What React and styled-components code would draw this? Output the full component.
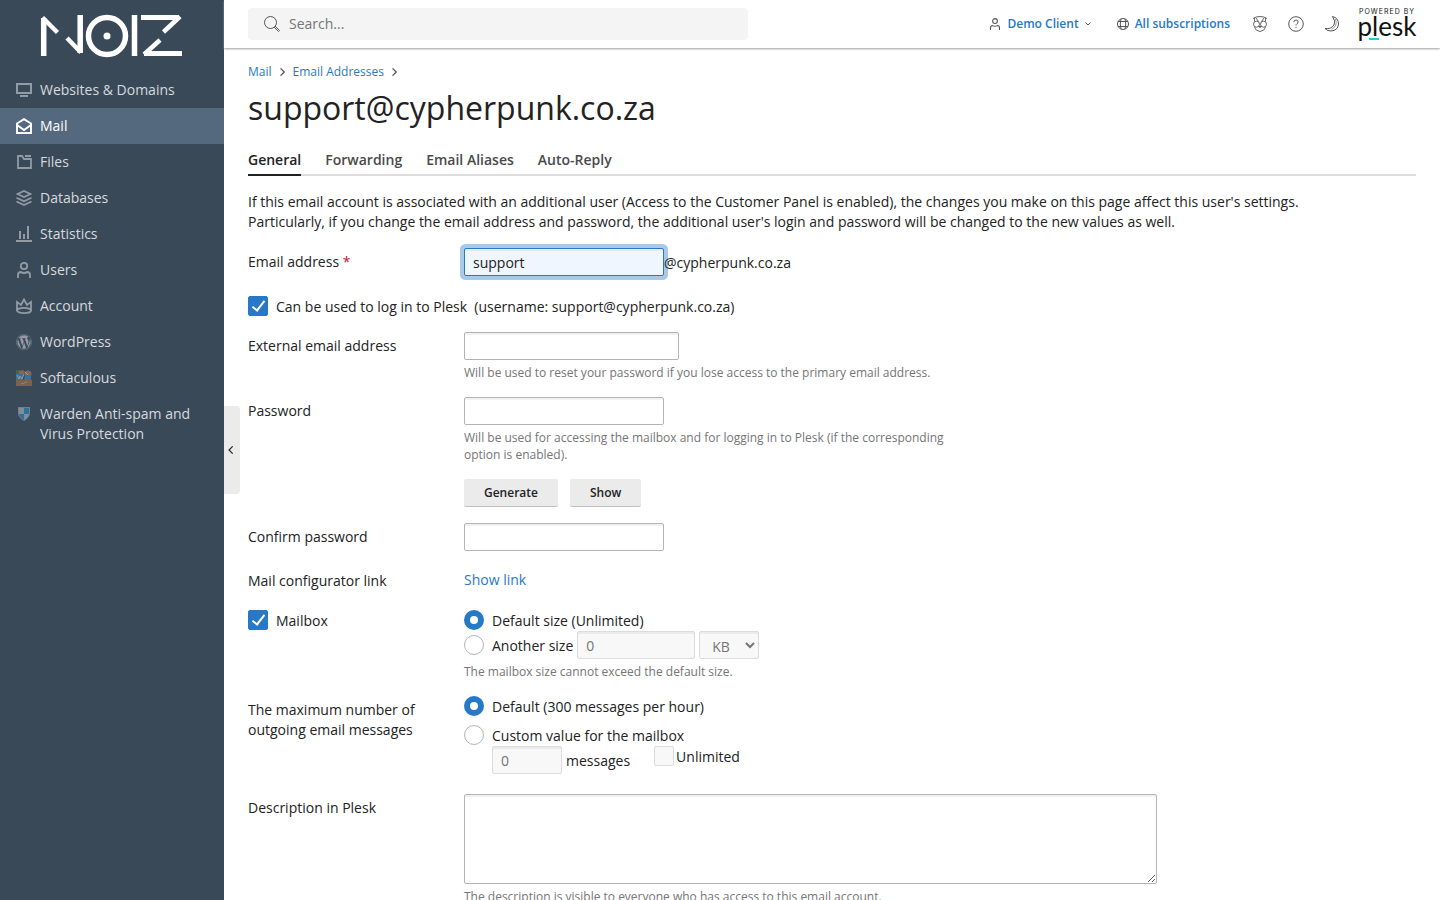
import React from 'react'
import styled, { createGlobalStyle, css } from 'styled-components'
import { FaWordpress } from 'react-icons/fa'

const GlobalStyle = createGlobalStyle`
    *, *::after {
        box-sizing: border-box;
    }
    body {
        margin: 0;
        background: #ffffff;
        color: #222222;
        font-family: "Open Sans", "Noto Sans", sans-serif;
        font-size: 14px;
        line-height: 20px;
    }
    input, select, textarea, button {
        font-family: inherit;
    }
    a {
        color: #2878c8;
        text-decoration: none;
    }
`

const Page = styled.div`
    display: flex;
    min-height: 100vh;
`

const Sidebar = styled.aside`
    flex: 0 0 224px;
    background: #3a4958;
`

const Brand = styled.a`
    display: flex;
    justify-content: center;
    height: 72px;
    padding-top: 12px;
`

const NavItem = styled.a`
    display: flex;
    gap: 8px;
    padding: 8px 16px;
    color: ${props => props.$active ? '#ffffff' : '#d6dade'};
    background: ${props => props.$active ? '#54697d' : 'transparent'};

    svg {
        flex: 0 0 16px;
        margin-top: 2px;
        color: ${props => props.$active ? '#ffffff' : '#929ba4'};
    }
`

const Content = styled.div`
    position: relative;
    flex: 1;
    min-width: 0;
`

const CollapseButton = styled.button`
    position: absolute;
    left: 0;
    top: 406px;
    width: 16px;
    height: 88px;
    padding: 0 2px 0 0;
    border: 0;
    border-radius: 0 4px 4px 0;
    background: #ebebeb;
    color: #222222;
    display: flex;
    align-items: center;
    justify-content: center;
`

const Header = styled.header`
    display: flex;
    align-items: center;
    justify-content: space-between;
    height: 48px;
    padding: 0 24px;
    box-shadow: 0 1px 2px #a0a0a0;
`

const SearchBox = styled.label`
    display: flex;
    align-items: center;
    gap: 9px;
    flex: 0 1 500px;
    height: 32px;
    padding: 0 16px;
    border-radius: 4px;
    background: #f4f4f4;
    color: #555555;

    input {
        flex: 1;
        height: 20px;
        margin-bottom: 2px;
        padding: 0;
        border: 0;
        outline: 0;
        background: transparent;
        font-size: 14px;
    }
    input::placeholder {
        color: #757575;
    }
`

const HeaderTools = styled.div`
    display: flex;
    align-items: center;
`

const HeaderLinks = styled.div`
    display: flex;
    gap: 26px;
    margin-right: 22px;
`

const HeaderLink = styled.a`
    display: flex;
    align-items: center;
    gap: 6px;
    font-size: 12px;
    font-weight: 600;

    svg {
        color: #555555;
    }
`

const HeaderIcons = styled.div`
    display: flex;
    gap: 20px;
    margin-right: 18px;
`

const IconButton = styled.button`
    display: flex;
    width: 16px;
    height: 16px;
    padding: 0;
    border: 0;
    background: transparent;
    color: #555555;
`

const PleskLogo = styled.a`
    display: flex;
    flex-direction: column;
    align-items: center;
    position: relative;
    width: 58px;
    height: 34px;
    color: #111111;
    font-family: Lato, sans-serif;

    small {
        font-family: Inter, sans-serif;
        font-size: 7px;
        line-height: 10px;
        letter-spacing: 1px;
        white-space: nowrap;
    }
    span {
        font-size: 26px;
        line-height: 18px;
    }
    &::after {
        content: '';
        position: absolute;
        left: 11px;
        bottom: 1px;
        width: 10px;
        height: 2px;
        background: #28c8e8;
    }
`

const Main = styled.main`
    padding: 14px 24px 0;
`

const Breadcrumbs = styled.nav`
    display: flex;
    align-items: center;
    gap: 7px;
    font-size: 12px;
    color: #555555;
`

const Title = styled.h1`
    margin: 6px 0 20px;
    font-size: 32px;
    line-height: 40px;
    font-weight: 400;
`

const Tabs = styled.nav`
    display: flex;
    gap: 24px;
    border-bottom: 2px solid #dcdcdc;
`

const Tab = styled.a`
    margin-bottom: -2px;
    padding: 2px 0 4px;
    border-bottom: 2px solid ${props => props.$active ? '#222222' : 'transparent'};
    color: ${props => props.$active ? '#222222' : '#4a4a4a'};
    font-weight: 600;
`

const Intro = styled.p`
    margin: 16px 0;
`

const FormRow = styled.div`
    display: grid;
    grid-template-columns: 184px minmax(0, 1fr);
    column-gap: 32px;
    margin-bottom: ${props => props.$gap || 16}px;
`

const FieldLabel = styled.label`
    padding-top: 4px;
`

const Required = styled.span`
    color: #c8102e;
`

const Suffix = styled.span`
    padding-top: 2px;
`

const field = css`
    border: 1px solid #b4b4b4;
    border-radius: 2px;
    background: #ffffff;
    box-shadow: inset 0 2px 0 #f0f0f0;
    color: #222222;
    font-size: 14px;

    &:disabled {
        border-color: #dcdcdc;
        background: #f8f8f8;
        box-shadow: inset 0 2px 0 #ebebeb;
        color: #757575;
    }
`

const TextInput = styled.input`
    ${field}
    display: block;
    width: ${props => props.$width}px;
    height: 28px;
    padding: 4px 8px;
    line-height: 18px;

    ${props => props.$focused && css`
        border-color: #2878c8;
        outline: 0;
        background: #eff6ff;
        box-shadow: 0 0 0 4px #a9c9e9, inset 0 2px 0 #e4ebf4;
    `}
`

const TextArea = styled.textarea`
    ${field}
    display: block;
    width: 100%;
    max-width: 693px;
    height: 90px;
    padding: 4px 8px;
`

const UnitSelect = styled.select`
    ${field}
    width: 60px;
    height: 28px;
    padding: 2px 0 0 8px;
    opacity: 1;
`

const Hint = styled.div`
    max-width: 500px;
    padding-top: 4px;
    color: #757575;
    font-size: 12px;
    line-height: 17px;
`

const Line = styled.div`
    display: flex;
    align-items: center;
    gap: ${props => props.$gap || 0}px;
    margin-top: ${props => props.$top || 0}px;
`

const Choice = styled.label`
    display: flex;
    align-items: flex-start;
    gap: ${props => props.$tight ? 2 : 8}px;
    white-space: pre-wrap;

    span {
        padding-top: 1px;
    }
`

const Checkbox = styled.input.attrs({ type: 'checkbox' })`
    appearance: none;
    flex: none;
    width: 20px;
    height: 20px;
    margin: 0;
    border: 1px solid #dcdcdc;
    border-radius: 2px;
    background: #f8f8f8;

    &:checked {
        display: flex;
        align-items: flex-start;
        justify-content: center;
        padding-top: 1px;
        border-color: #2878c8;
        background: #2878c8;
    }
    &:checked::after {
        content: '';
        width: 7px;
        height: 13px;
        border: solid #ffffff;
        border-width: 0 2px 2px 0;
        transform: rotate(38deg);
    }
`

const Radio = styled.input.attrs({ type: 'radio' })`
    appearance: none;
    flex: none;
    width: 20px;
    height: 20px;
    margin: 0;
    border: 1px solid #b4b4b4;
    border-radius: 50%;
    background: #ffffff;

    &:checked {
        border: 6px solid #2878c8;
    }
`

const CheckRow = styled.div`
    margin: 20px 0 15px;
`

const Indented = styled.div`
    display: flex;
    align-items: flex-start;
    gap: 24px;
    padding-left: 28px;
`

const ButtonBar = styled.div`
    display: flex;
    gap: 12px;
    margin-top: 16px;
`

const Button = styled.button`
    height: 28px;
    padding: 0 20px;
    border: 0;
    border-bottom: 1px solid #c0c0c0;
    border-radius: 2px;
    background: #ebebeb;
    color: #222222;
    font-size: 12px;
    font-weight: 600;
`

const Icon = ({ size = 16, width = 1, children }) => (
    <svg width={size} height={size} viewBox={`0 0 ${size} ${size}`} fill="none" stroke="currentColor" strokeWidth={width} aria-hidden="true">
        {children}
    </svg>
)

const Chevron = () => (
    <svg width="7" height="8" viewBox="0 0 7 8" fill="none" stroke="currentColor" strokeWidth="1.200" aria-hidden="true">
        <path d="M1.500 .3 5.200 4 1.500 7.700" />
    </svg>
)

const UserShape = () => (
    <>
        <circle cx="8" cy="4" r="3.2" />
        <path d="M2 16v-3q0-3 3-3 1 1 3 1t3-1q3 0 3 3v3" />
    </>
)

const NoizLogo = () => (
    <svg width="144" height="48" viewBox="0 0 144 48" fill="none" stroke="#ffffff" strokeWidth="5.500" role="img" aria-label="Noiz">
        <line x1="3.700" y1="6" x2="3.700" y2="44" />
        <line x1="2.500" y1="5.500" x2="17.500" y2="20.500" strokeWidth="4.500" />
        <line x1="27" y1="26" x2="41" y2="40.500" strokeWidth="4.500" />
        <line x1="40.200" y1="3" x2="40.200" y2="41" />
        <circle cx="67" cy="24" r="18.500" />
        <circle cx="67" cy="24" r="3.500" fill="#ffffff" stroke="none" />
        <line x1="94.500" y1="3" x2="94.500" y2="44" />
        <line x1="101" y1="5.500" x2="139" y2="5.500" strokeWidth="5" />
        <line x1="140" y1="4.500" x2="123.500" y2="20" strokeWidth="4.500" />
        <line x1="120" y1="28" x2="104" y2="42.500" strokeWidth="4.500" />
        <line x1="104" y1="41.500" x2="142" y2="41.500" strokeWidth="5" />
    </svg>
)

const navItems = [
    {
        label: 'Websites & Domains',
        icon: <Icon width={2}><path d="M1 2h14v9H1zM4 14h8" /></Icon>
    },
    {
        label: 'Mail',
        active: true,
        icon: <Icon width={2}><path d="M1 5.500 8 1.200l7 4.300V15H1zM1 7l7 5 7-5" /></Icon>
    },
    {
        label: 'Files',
        icon: <Icon width={1.8}><path d="M2 2h4l2 3h7v9H2zM9 2h6" /></Icon>
    },
    {
        label: 'Databases',
        icon: <Icon width={1.8}><path d="m1.500 4 6.500-3 6.500 3L8 7zM.5 7.700l7.500 3.600 7.500-3.600M.5 11.500 8 15l7.500-3.500" /></Icon>
    },
    {
        label: 'Statistics',
        icon: <Icon width={2}><path d="M0 15h16M4 5v8M8 8v5M12 0v13" /></Icon>
    },
    {
        label: 'Users',
        icon: <Icon width={1.8}><UserShape /></Icon>
    },
    {
        label: 'Account',
        icon: <Icon width={1.8}><path d="M1 13V4l4 3 3-5.500L11 7l4-3v9" /><ellipse cx="8" cy="12.500" rx="7" ry="2.600" /></Icon>
    },
    {
        label: 'WordPress',
        icon: <FaWordpress size={16} />
    },
    {
        label: 'Softaculous',
        icon: (
            <svg width="16" height="16" viewBox="0 0 16 16" aria-hidden="true">
                <path fill="#3f6650" d="M0 0h4v4H0z" />
                <path fill="#8c6350" d="m3 1 4-1 2 2-2 3H3z" />
                <path fill="#3d7195" d="M0 4h7v6H0z" />
                <path fill="none" d="m1 5 2 4 1-3 2 3 2-5" stroke="#8a9ba6" />
                <circle cx="12" cy="4" r="3.500" fill="#80685e" />
                <path fill="#3572a0" d="M9 5h6v5H8z" />
                <path fill="none" stroke="#92a3ad" d="m9 2 3 3" />
                <path fill="#79644b" d="M0 10h16v6H0z" />
                <path fill="none" stroke="#928470" d="m5 14 3-1 3-1" />
            </svg>
        )
    },
    {
        label: 'Warden Anti-spam and Virus Protection',
        icon: (
            <svg width="16" height="16" viewBox="0 0 16 16" aria-hidden="true">
                <path fill="#70808d" d="M2 1h12v7q-1 4-6 7-5-3-6-7z" />
                <path fill="#32709c" d="M8 2h5v6H8zM3 8h5v6q-4-2-5-6z" />
                <path fill="#7e8f9b" d="M3 2h5v6H3zM8 8h5q-1 4-5 6z" />
            </svg>
        )
    }
]

const tabs = ['General', 'Forwarding', 'Email Aliases', 'Auto-Reply']

export default function App() {
    return (
        <Page>
            <GlobalStyle />
            <Sidebar>
                <Brand href="#"><NoizLogo /></Brand>
                <nav>
                    {navItems.map(item => (
                        <NavItem href="#" key={item.label} $active={item.active}>
                            {item.icon}
                            <span>{item.label}</span>
                        </NavItem>
                    ))}
                </nav>
            </Sidebar>
            <Content>
                <Header>
                    <SearchBox>
                        <Icon><circle cx="6.500" cy="6.500" r="6" /><path d="m11 10 4.500 4.500-1 1L10 11" /></Icon>
                        <input type="text" placeholder="Search..." aria-label="Search" />
                    </SearchBox>
                    <HeaderTools>
                        <HeaderLinks>
                            <HeaderLink href="#">
                                <svg width="12" height="12" viewBox="0 0 16 16" fill="none" stroke="currentColor" strokeWidth="1.400" aria-hidden="true"><UserShape /></svg>
                                Demo Client
                                <svg width="6" height="4" viewBox="0 0 6 4" fill="none" stroke="currentColor" aria-hidden="true"><path d="m.5.5 2.500 2.500L5.500.5" /></svg>
                            </HeaderLink>
                            <HeaderLink href="#">
                                <Icon size={12}><circle cx="6" cy="6" r="5.500" /><path d="M4 1Q2.500 6 4 11M8 1q1.500 5 0 10M1 3.500h10M1 8.500h10" /></Icon>
                                All subscriptions
                            </HeaderLink>
                        </HeaderLinks>
                        <HeaderIcons>
                            <IconButton type="button" aria-label="Assistant">
                                <Icon width={0.9}>
                                    <path d="M1 2.500Q4 .5 8 .5t7 2M2.500 2v3.500M13.500 2v3.500M4 2l2.500 3.500M12 2 9.500 5.500M2.500 11q1 4 5.500 4.500 4.500-.5 5.500-4.500M7 10.500h2l-1 1.300z" />
                                    <circle cx="4.500" cy="8.200" r="3" />
                                    <circle cx="11.500" cy="8.200" r="3" />
                                </Icon>
                            </IconButton>
                            <IconButton type="button" aria-label="Help">
                                <Icon><circle cx="8" cy="8" r="7.300" /><path d="M5.800 6.200q0-2.200 2.200-2.200t2.200 2q0 1-1.200 1.600-1 .6-1 1.900M8 11v1" /></Icon>
                            </IconButton>
                            <IconButton type="button" aria-label="Dark mode">
                                <Icon><path d="M8.500 .5q6 1.500 6 7.500-.5 6.500-7.500 7-4 0-6-2.500 6 1 9-3.500 2-4-1.500-8.500z" /><path strokeWidth=".6" d="M11.500 3q2.500 7-4 10.500" /></Icon>
                            </IconButton>
                        </HeaderIcons>
                        <PleskLogo href="#"><small>POWERED BY</small><span>plesk</span></PleskLogo>
                    </HeaderTools>
                </Header>
                <CollapseButton type="button" aria-label="Collapse sidebar">
                    <svg width="6" height="8" viewBox="0 0 6 8" fill="none" stroke="currentColor" strokeWidth="1.100" aria-hidden="true"><path d="M4.700.3 1 4l3.700 3.700" /></svg>
                </CollapseButton>
                <Main>
                    <Breadcrumbs>
                        <a href="#">Mail</a><Chevron />
                        <a href="#">Email Addresses</a><Chevron />
                    </Breadcrumbs>
                    <Title>support@cypherpunk.co.za</Title>
                    <Tabs>
                        {tabs.map((tab, i) => <Tab href="#" key={tab} $active={i === 0}>{tab}</Tab>)}
                    </Tabs>
                    <Intro>
                        If this email account is associated with an additional user (Access to the Customer Panel is enabled), the changes you make on this page affect this user's settings.
                        <br />
                        Particularly, if you change the email address and password, the additional user's login and password will be changed to the new values as well.
                    </Intro>
                    <form>
                        <FormRow>
                            <FieldLabel htmlFor="email">Email address <Required>*</Required></FieldLabel>
                            <Line>
                                <TextInput id="email" defaultValue="support" $width={200} $focused />
                                <Suffix>@cypherpunk.co.za</Suffix>
                            </Line>
                        </FormRow>
                        <CheckRow>
                            <Choice><Checkbox defaultChecked /><span>{'Can be used to log in to Plesk  (username: support@cypherpunk.co.za)'}</span></Choice>
                        </CheckRow>
                        <FormRow>
                            <FieldLabel htmlFor="external">External email address</FieldLabel>
                            <div>
                                <TextInput id="external" type="email" $width={215} />
                                <Hint>Will be used to reset your password if you lose access to the primary email address.</Hint>
                            </div>
                        </FormRow>
                        <FormRow>
                            <FieldLabel htmlFor="password">Password</FieldLabel>
                            <div>
                                <TextInput id="password" type="password" $width={200} />
                                <Hint>Will be used for accessing the mailbox and for logging in to Plesk (if the corresponding option is enabled).</Hint>
                                <ButtonBar>
                                    <Button type="button">Generate</Button>
                                    <Button type="button">Show</Button>
                                </ButtonBar>
                            </div>
                        </FormRow>
                        <FormRow>
                            <FieldLabel htmlFor="confirm">Confirm password</FieldLabel>
                            <TextInput id="confirm" type="password" $width={200} />
                        </FormRow>
                        <FormRow $gap={19}>
                            <FieldLabel as="div">Mail configurator link</FieldLabel>
                            <Line $top={2}><a href="#">Show link</a></Line>
                        </FormRow>
                        <FormRow>
                            <div><Choice><Checkbox defaultChecked /><span>Mailbox</span></Choice></div>
                            <div>
                                <Choice><Radio name="size" defaultChecked /><span>Default size (Unlimited)</span></Choice>
                                <Line $gap={4}>
                                    <Choice><Radio name="size" /><span>Another size</span></Choice>
                                    <TextInput aria-label="Mailbox size" defaultValue="0" $width={118} disabled />
                                    <UnitSelect aria-label="Size unit" disabled><option>KB</option></UnitSelect>
                                </Line>
                                <Hint>The mailbox size cannot exceed the default size.</Hint>
                            </div>
                        </FormRow>
                        <FormRow $gap={20}>
                            <FieldLabel as="div">The maximum number of outgoing email messages</FieldLabel>
                            <div>
                                <Choice><Radio name="limit" defaultChecked /><span>Default (300 messages per hour)</span></Choice>
                                <Line $top={8}><Choice><Radio name="limit" /><span>Custom value for the mailbox</span></Choice></Line>
                                <Indented>
                                    <Line $gap={4}>
                                        <TextInput id="messages" defaultValue="0" $width={70} disabled />
                                        <Suffix as="label" htmlFor="messages">messages</Suffix>
                                    </Line>
                                    <Choice $tight><Checkbox disabled /><span>Unlimited</span></Choice>
                                </Indented>
                            </div>
                        </FormRow>
                        <FormRow>
                            <FieldLabel htmlFor="description">Description in Plesk</FieldLabel>
                            <div>
                                <TextArea id="description" />
                                <Hint>The description is visible to everyone who has access to this email account.</Hint>
                            </div>
                        </FormRow>
                    </form>
                </Main>
            </Content>
        </Page>
    )
}
